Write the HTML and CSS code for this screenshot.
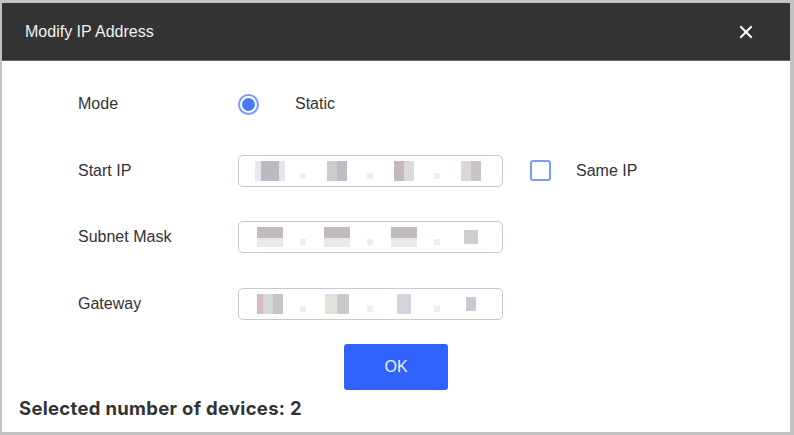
FILE: index.html
```html
<!DOCTYPE html>
<html>
<head>
<meta charset="utf-8">
<link rel="stylesheet" href="styles.css">
</head>
<body>
<div class="dialog">
  <div class="header">
    <span class="title">Modify IP Address</span>
    <svg class="close" width="14" height="14" viewBox="0 0 14 14"><path d="M2 2 L12 12 M12 2 L2 12" stroke="#fff" stroke-width="2" stroke-linecap="square"/></svg>
  </div>
  <div class="body">
    <div class="form">
      <div class="label">Mode</div>
      <div class="control">
        <span class="radio"><span class="dot"></span></span>
        <span class="opt">Static</span>
      </div>

      <div class="label">Start IP</div>
      <div class="control">
        <div class="ip">
          <span class="seg"><span class="cell"><span class="blk b1"></span></span><span class="sep"></span></span>
          <span class="seg"><span class="cell"><span class="blk b2"></span></span><span class="sep"></span></span>
          <span class="seg"><span class="cell"><span class="blk b3"></span></span><span class="sep"></span></span>
          <span class="seg last"><span class="cell"><span class="blk b4"></span></span></span>
        </div>
        <span class="check"></span>
        <span class="same">Same IP</span>
      </div>

      <div class="label">Subnet Mask</div>
      <div class="control">
        <div class="ip">
          <span class="seg"><span class="cell"><span class="blk m"></span></span><span class="sep"></span></span>
          <span class="seg"><span class="cell"><span class="blk m"></span></span><span class="sep"></span></span>
          <span class="seg"><span class="cell"><span class="blk m"></span></span><span class="sep"></span></span>
          <span class="seg last"><span class="cell"><span class="blk m0"></span></span></span>
        </div>
      </div>

      <div class="label">Gateway</div>
      <div class="control">
        <div class="ip">
          <span class="seg"><span class="cell"><span class="blk g1"></span></span><span class="sep"></span></span>
          <span class="seg"><span class="cell"><span class="blk g2"></span></span><span class="sep"></span></span>
          <span class="seg"><span class="cell"><span class="blk g3"></span></span><span class="sep"></span></span>
          <span class="seg last"><span class="cell"><span class="blk g4"></span></span></span>
        </div>
      </div>
    </div>
    <div class="actions"><button class="ok">OK</button></div>
    <div class="footer">Selected number of devices: 2</div>
  </div>
</div>
</body>
</html>
```

FILE: styles.css
```css
* { box-sizing: border-box; }
html, body { margin: 0; padding: 0; background: #fff; }
body { font-family: "Liberation Sans", Arial, sans-serif; color: #333; }
.dialog {
  width: 794px;
  height: 435px;
  border-style: solid;
  border-color: #c2c2c2;
  border-width: 3px 4px 3px 2px;
  display: flex;
  flex-direction: column;
}
.header {
  height: 58px;
  background: #333;
  display: flex;
  align-items: center;
  justify-content: space-between;
  padding: 0 37px 0 23px;
  border-bottom: 1px solid #6a6a6a;
}
.title { color: #f2f2f2; font-size: 16px; }
.close { display: block; }
.body { flex: 1; display: flex; flex-direction: column; padding-top: 27px; }
.form {
  display: grid;
  grid-template-columns: 160px 1fr;
  grid-auto-rows: 32px;
  row-gap: 34.5px;
  padding-left: 76px;
}
.label { display: flex; align-items: center; font-size: 16px; color: #333; }
.control { display: flex; align-items: center; }
.radio {
  width: 21px; height: 21px;
  border: 2px solid #7a9bf7;
  border-radius: 50%;
  display: flex; align-items: center; justify-content: center;
}
.radio .dot { width: 13px; height: 13px; border-radius: 50%; background: #4a78f6; }
.opt { margin-left: 36px; font-size: 16px; }
.ip {
  width: 265px; height: 32px;
  border: 1px solid #c6cad3;
  border-radius: 5px;
  display: flex; align-items: center;
  padding-left: 11px;
  overflow: hidden;
}
.seg { width: 67px; flex-shrink: 0; display: flex; align-items: center; height: 100%; }
.seg.last { width: 40px; }
.cell { width: 40px; display: flex; justify-content: center; align-items: center; }
.blk { width: 26px; height: 20px; display: block; }
.sep { width: 6px; height: 6px; background: #eceef2; margin: 10px 0 0 10px; }
.b1 { background: linear-gradient(90deg, #e8e8ee 0 20%, #bdb9c2 20% 80%, #e4e4ea 80%); width: 30px; }
.b2 { background: linear-gradient(90deg, #cfcbd0 0 50%, #c0bcc6 50%); width: 20px; }
.b3 { background: linear-gradient(90deg, #c6b8bc 0 50%, #d8dade 50%); width: 20px; }
.b4 { background: linear-gradient(90deg, #dcd6d4 0 50%, #c8c4c8 50%); width: 20px; }
.m { background: linear-gradient(180deg, #c2bcbc 0 55%, #ece8e8 55%); width: 26px; }
.m0 { background: #d0ccd0; width: 14px; height: 14px; }
.g1 { background: linear-gradient(90deg, #d8bcc0 0 25%, #d4d8dc 25% 60%, #c8c4c8 60%); width: 26px; }
.g2 { background: linear-gradient(90deg, #e4e0dc 0 50%, #ccc8cc 50%); width: 24px; }
.g3 { background: #d4d4dc; width: 14px; }
.g4 { background: #c8c8d0; width: 10px; height: 14px; }
.check {
  width: 21px; height: 21px;
  border: 2px solid #7a9bf7;
  border-radius: 3px;
  margin-left: 27px;
}
.same { margin-left: 25px; font-size: 16px; }
.actions { display: flex; justify-content: center; margin-top: 24px; }
.ok {
  width: 104px; height: 46px;
  background: #2f62fb;
  color: #eef2ff;
  border: none;
  border-radius: 3px;
  font-family: "Liberation Sans", Arial, sans-serif;
  font-size: 16px;
  padding: 0;
}
.footer {
  margin-top: 7px;
  padding-left: 17px;
  font-family: Inter, "Open Sans", sans-serif;
  font-weight: 700;
  font-size: 18.5px;
  letter-spacing: 0.3px;
  color: #333;
}
```
